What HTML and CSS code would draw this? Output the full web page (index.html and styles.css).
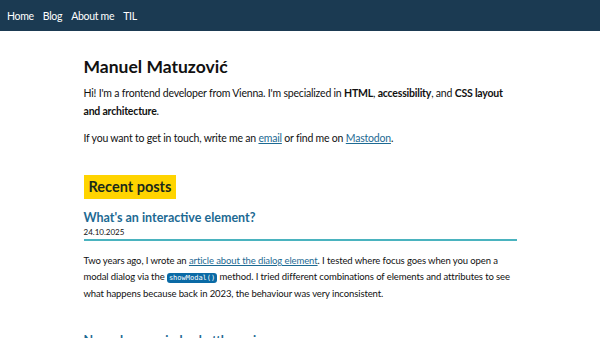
FILE: index.html
```html
<!DOCTYPE html>
<html lang="en">
<head>
    <meta charset="UTF-8">
    <meta name="viewport" content="width=device-width, initial-scale=1.0">
    <title>Manuel Matuzović</title>
    <link rel="stylesheet" href="styles.css">
</head>
<body>
<header class="site-header">
    <nav class="main-nav">
        <a href="#">Home</a>
        <a href="#">Blog</a>
        <a href="#">About me</a>
        <a href="#">TIL</a>
    </nav>
</header>

<main class="content">
    <h1 class="title">Manuel Matuzović</h1>
    <p>Hi! I'm a frontend developer from Vienna. I'm specialized in <strong>HTML</strong>, <strong>accessibility</strong>, and <strong>CSS layout and architecture</strong>.</p>
    <p>If you want to get in touch, write me an <a href="#">email</a> or find me on <a href="#">Mastodon</a>.</p>

    <h2 class="section-title">Recent posts</h2>

    <article class="post">
        <div class="post-head">
            <h3 class="post-title"><a href="#">What's an interactive element?</a></h3>
            <time class="post-date">24.10.2025</time>
        </div>
        <p>Two years ago, I wrote an <a href="#">article about the dialog element</a>. I tested where focus goes when you open a modal dialog via the <code>showModal()</code> method. I tried different combinations of elements and attributes to see what happens because back in 2023, the behaviour was very inconsistent.</p>
    </article>

    <article class="post">
        <div class="post-head">
            <h3 class="post-title"><a href="#">Never lose a z-index battle again</a></h3>
        </div>
    </article>
</main>
</body>
</html>
```

FILE: styles.css
```css
body {
    margin: 0;
    font-family: Lato, sans-serif;
    font-size: 10.5px;
    letter-spacing: -0.2px;
    line-height: 18px;
    color: #111;
    background: #fff;
}

a {
    color: #1d6a93;
}

.site-header {
    background-color: #1b3a52;
    height: 31px;
}

.main-nav {
    display: flex;
    gap: 9px;
    padding: 0 7px;
    line-height: 33px;
}

.main-nav a {
    color: #fff;
    text-decoration: none;
    font-size: 10.5px;
    letter-spacing: -0.3px;
}

.content {
    max-width: 433px;
    margin: 0 auto;
    padding-top: 24px;
}

.title {
    font-size: 17.5px;
    letter-spacing: 0;
    line-height: 24px;
    margin: 0 0 5px;
}

.content p {
    margin: 0 0 8.5px;
}

.section-title {
    display: inline-block;
    background-color: #ffd400;
    font-size: 14.5px;
    letter-spacing: 0;
    line-height: 24px;
    padding: 0 5px;
    margin: 20px 0 11px;
    color: #1a2a1a;
}

.post-head {
    border-bottom: 2px solid #4ab3bf;
    padding-bottom: 1px;
    margin-bottom: 12px;
}

.post-title {
    font-size: 12.5px;
    letter-spacing: 0;
    line-height: 16px;
    margin: 0;
}

.post-title a {
    color: #1d6a93;
    text-decoration: none;
}

.post-date {
    display: block;
    font-size: 8px;
    letter-spacing: 0;
    line-height: 12px;
}

.post p {
    font-size: 9.5px;
    letter-spacing: -0.1px;
    line-height: 15.5px;
}

.post + .post {
    margin-top: 31px;
}

code {
    font-family: "DejaVu Sans Mono", monospace;
    font-size: 7px;
    letter-spacing: 0;
    background-color: #0a6aa5;
    color: #fff;
    padding: 1px 2px;
    border-radius: 3px;
}
```
